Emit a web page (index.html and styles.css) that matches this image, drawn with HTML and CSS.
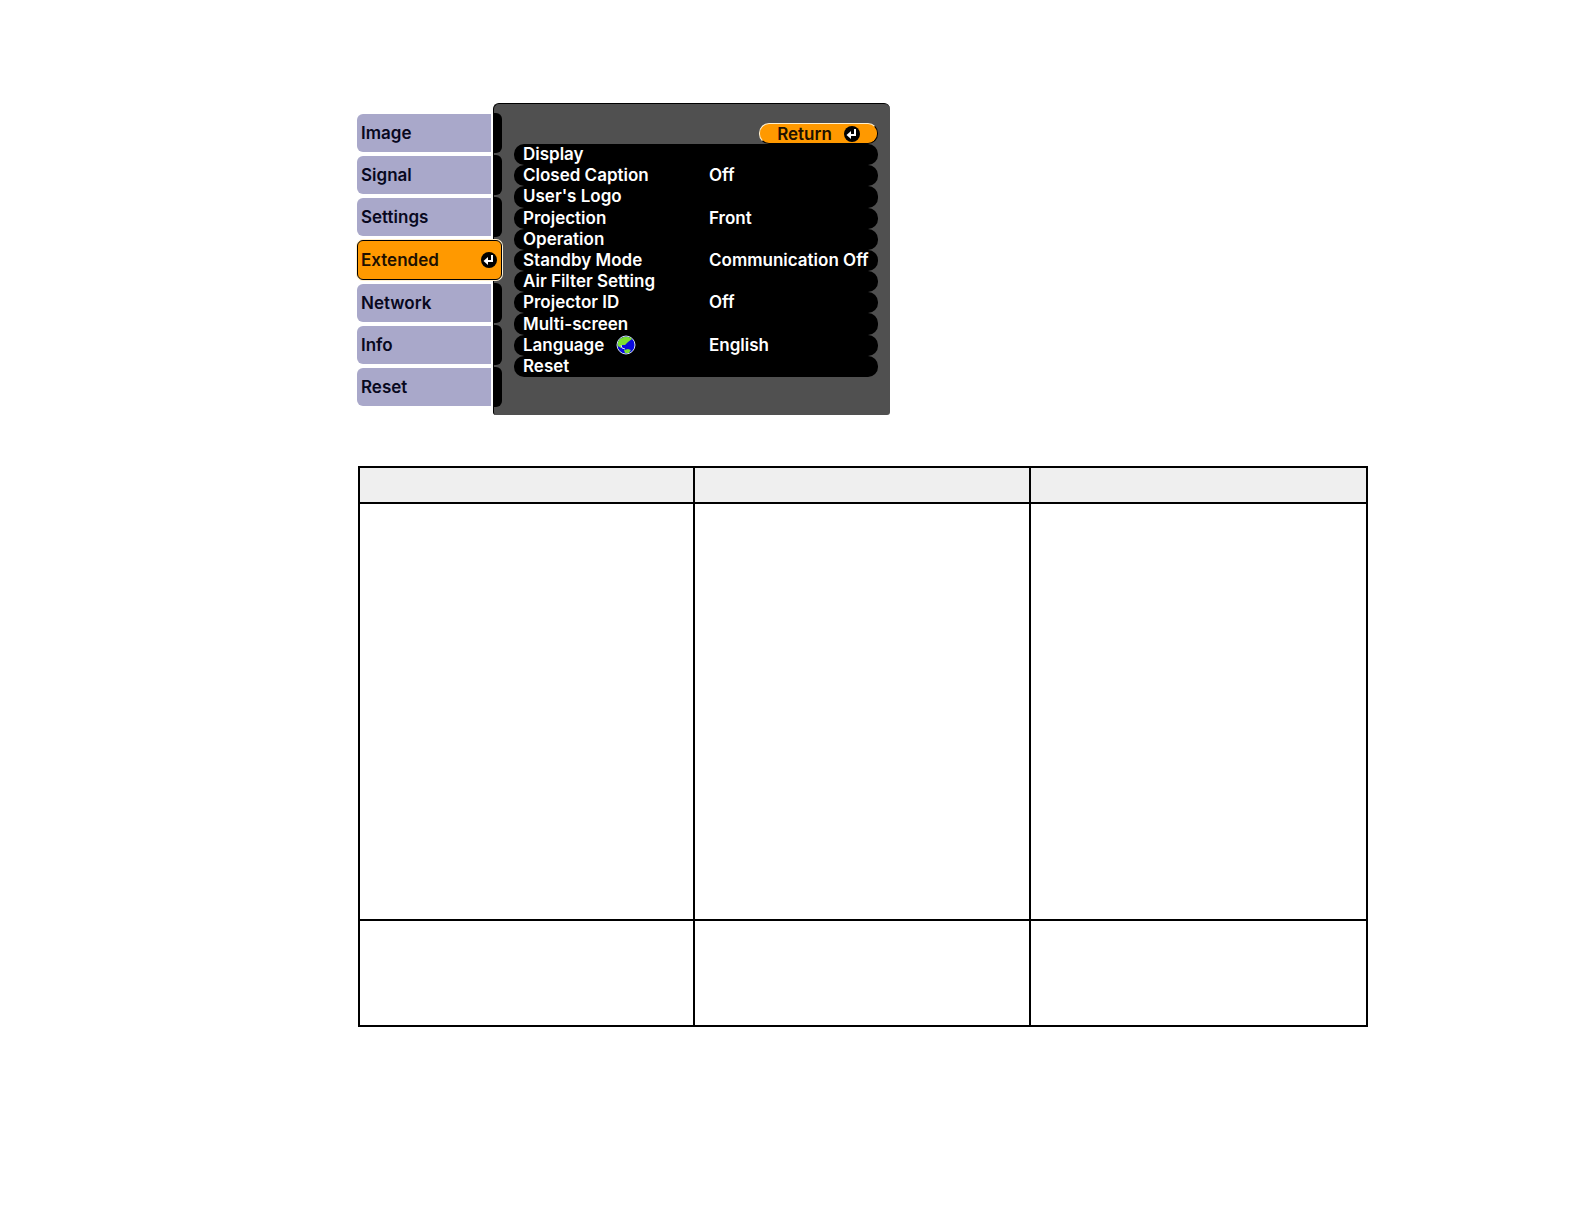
FILE: index.html
```html
<!DOCTYPE html>
<html lang="en">
<head>
    <meta charset="UTF-8">
    <title>Extended Menu</title>
    <link rel="stylesheet" href="styles.css">
</head>
<body>
    <main class="page">
        <div class="menu">
            <nav class="tabs">
                <button class="tab"><span>Image</span></button>
                <button class="tab"><span>Signal</span></button>
                <button class="tab"><span>Settings</span></button>
                <button class="tab active">
                    <span>Extended</span>
                    <svg class="enter" viewBox="0 0 16 16" aria-hidden="true">
                        <circle cx="8" cy="8" r="8" fill="#000"/>
                        <path d="M11 3v6H6" fill="none" stroke="#fff" stroke-width="2"/>
                        <path d="M2.5 9L7 5v8z" fill="#fff"/>
                    </svg>
                </button>
                <button class="tab"><span>Network</span></button>
                <button class="tab"><span>Info</span></button>
                <button class="tab"><span>Reset</span></button>
            </nav>
            <section class="panel">
                <button class="return">
                    Return
                    <svg class="enter" viewBox="0 0 16 16" aria-hidden="true">
                        <circle cx="8" cy="8" r="8" fill="#000"/>
                        <path d="M11 3v6H6" fill="none" stroke="#fff" stroke-width="2"/>
                        <path d="M2.5 9L7 5v8z" fill="#fff"/>
                    </svg>
                </button>
                <div class="items">
                    <button class="item"><span>Display</span></button>
                    <button class="item"><span>Closed Caption</span><span>Off</span></button>
                    <button class="item"><span>User's Logo</span></button>
                    <button class="item"><span>Projection</span><span>Front</span></button>
                    <button class="item"><span>Operation</span></button>
                    <button class="item"><span>Standby Mode</span><span>Communication Off</span></button>
                    <button class="item"><span>Air Filter Setting</span></button>
                    <button class="item"><span>Projector ID</span><span>Off</span></button>
                    <button class="item"><span>Multi-screen</span></button>
                    <button class="item">
                        <span class="language">Language
                            <svg class="globe" viewBox="0 0 20 20" aria-hidden="true">
                                <circle cx="10" cy="10" r="9" fill="#0a0ae0" stroke="#d4e4f4"/>
                                <path d="M4 4Q9 0 15 3L16 4L12 7L9 10L6 10L5 13L2 11Q1 7 4 4z" fill="#7be030"/>
                                <path d="M8 15l4-1 3 1-2 3-4 0z" fill="#7be030"/>
                                <path d="M5 10l1 3 3 1" fill="none" stroke="#d4e4f4"/>
                            </svg>
                        </span>
                        <span>English</span>
                    </button>
                    <button class="item"><span>Reset</span></button>
                </div>
            </section>
        </div>

        <table class="settings">
            <thead>
                <tr><th></th><th></th><th></th></tr>
            </thead>
            <tbody>
                <tr class="tall"><td></td><td></td><td></td></tr>
                <tr class="short"><td></td><td></td><td></td></tr>
            </tbody>
        </table>
    </main>
</body>
</html>
```
FILE: styles.css
```css
body {
    margin: 0;
    background: #fff;
    font-family: Inter, "Liberation Sans", sans-serif;
    font-size: 17px;
    font-weight: 600;
}

button {
    margin: 0;
    padding: 0;
    border: none;
    background: none;
    font: inherit;
    text-align: left;
    cursor: pointer;
}

.page {
    padding: 103px 216px 40px 357px;
}

.menu {
    display: flex;
    max-width: 533px;
}

/* tabs overlap the left edge of the panel */
.tabs {
    display: flex;
    flex-direction: column;
    gap: 2px;
    flex: 0 0 145px;
    margin-right: -9px;
    padding-top: 10px;
    z-index: 1;
}

.tab {
    display: flex;
    height: 40px;
    color: #080820;
    line-height: 38px;
}

.tab span {
    flex: 1;
    margin: 1px 0;
    padding-left: 4px;
    border-radius: 6px 0 0 6px;
    background: #a9a8ca;
}

.tab::after {
    content: "";
    width: 9px;
    margin-left: 2px;
    border-radius: 0 6px 6px 0;
    background: #000;
}

.tab.active {
    align-items: center;
    margin: 1px 0;
    padding-right: 4px;
    box-sizing: border-box;
    border: 1px solid #000;
    border-radius: 6px;
    background: #ff9900;
    box-shadow: 0 0 0 1px #fff0d0;
    color: #201000;
}

.tab.active span {
    padding-left: 3px;
    background: none;
}

.tab.active::after {
    display: none;
}

.enter {
    width: 16px;
    height: 16px;
}

.panel {
    display: flex;
    flex-direction: column;
    flex: 1;
    padding: 19px 12px 38px 20px;
    border-top: 1px solid #000;
    border-left: 1px solid #000;
    border-radius: 6px 6px 3px 3px;
    background: #505050;
}

.return {
    display: flex;
    align-items: center;
    justify-content: center;
    gap: 12px;
    align-self: flex-end;
    width: 119px;
    height: 21px;
    box-sizing: border-box;
    border: 1px solid #000;
    border-top-color: #fff0d0;
    border-left-color: #fff0d0;
    border-radius: 10px;
    background: #ff9900;
    color: #201000;
}

.items {
    display: grid;
    grid-template-rows: repeat(11, 1fr);
    height: 233px;
}

.item {
    display: grid;
    grid-template-columns: 186px 1fr;
    align-items: center;
    padding-left: 9px;
    border-radius: 10px;
    background: #000;
    color: #fff;
    line-height: 21px;
    white-space: nowrap;
}

.language {
    display: flex;
    align-items: center;
    gap: 12px;
}

.globe {
    width: 20px;
    height: 20px;
}

.settings {
    width: calc(100% - 1px);
    margin-top: 51px;
    margin-left: 1px;
    border-collapse: collapse;
    table-layout: fixed;
}

.settings th,
.settings td {
    padding: 0;
    border: 2px solid #000;
}

.settings th {
    height: 34px;
    background: #efefef;
}

.settings th:first-child {
    width: 33%;
}

.settings .tall td {
    height: 415px;
}

.settings .short td {
    height: 104px;
}
```
